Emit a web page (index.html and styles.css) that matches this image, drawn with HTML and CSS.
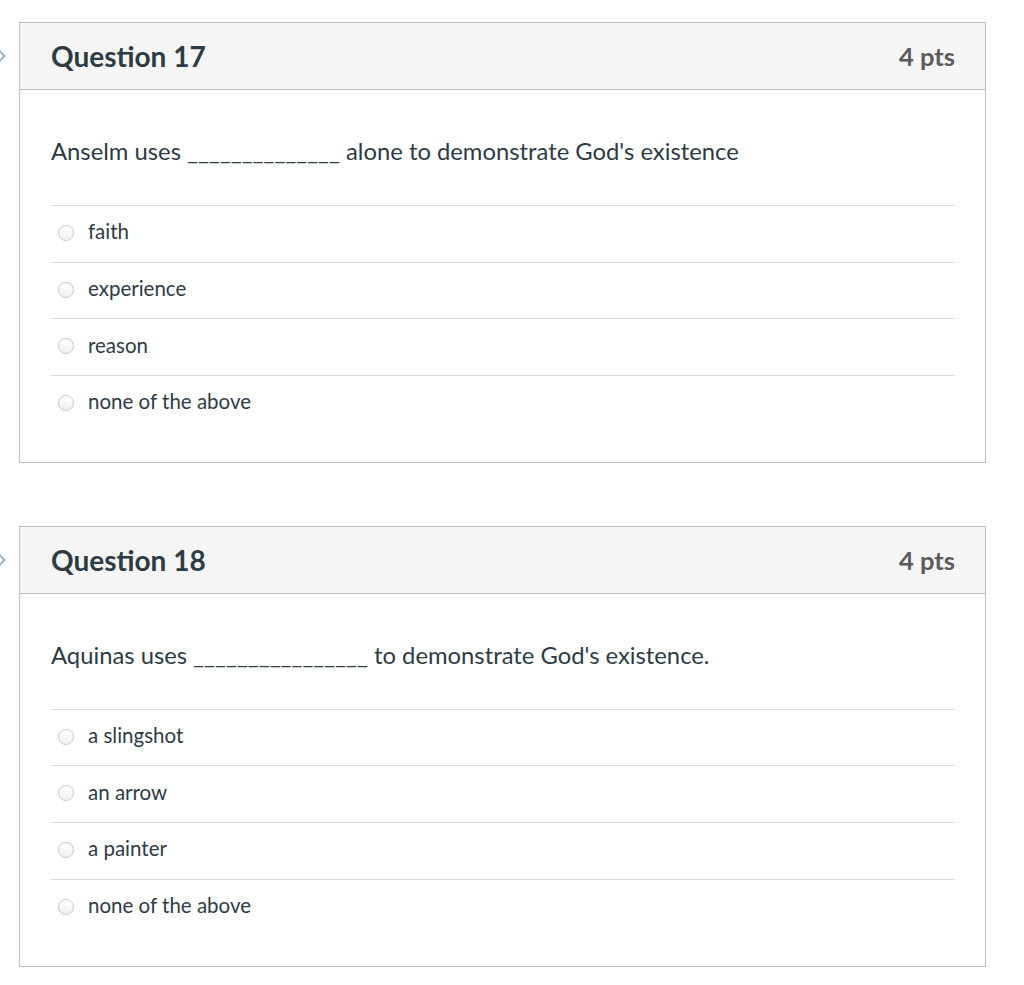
FILE: index.html
```html
<!DOCTYPE html>
<html>
<head>
<meta charset="utf-8">
<link rel="stylesheet" href="styles.css">
</head>
<body>
<div class="quiz">
  <div class="question-row">
    <div class="gutter">
      <svg class="chev" width="8" height="14" viewBox="0 0 8 14"><polyline points="0,1.5 5.5,7 0,12.5" fill="none" stroke="#9db6ca" stroke-width="2.2"/></svg>
    </div>
    <div class="card">
      <div class="card-header">
        <h2 class="title">Question 17</h2>
        <span class="pts">4 pts</span>
      </div>
      <div class="card-body">
        <p class="qtext">Anselm uses ______________ alone to demonstrate God's existence</p>
        <div class="answers">
          <label class="answer"><span class="radio"></span><span class="atext">faith</span></label>
          <label class="answer"><span class="radio"></span><span class="atext">experience</span></label>
          <label class="answer"><span class="radio"></span><span class="atext">reason</span></label>
          <label class="answer"><span class="radio"></span><span class="atext">none of the above</span></label>
        </div>
      </div>
    </div>
  </div>
  <div class="question-row">
    <div class="gutter">
      <svg class="chev" width="8" height="14" viewBox="0 0 8 14"><polyline points="0,1.5 5.5,7 0,12.5" fill="none" stroke="#9db6ca" stroke-width="2.2"/></svg>
    </div>
    <div class="card">
      <div class="card-header">
        <h2 class="title">Question 18</h2>
        <span class="pts">4 pts</span>
      </div>
      <div class="card-body">
        <p class="qtext">Aquinas uses ________________ to demonstrate God's existence.</p>
        <div class="answers">
          <label class="answer"><span class="radio"></span><span class="atext">a slingshot</span></label>
          <label class="answer"><span class="radio"></span><span class="atext">an arrow</span></label>
          <label class="answer"><span class="radio"></span><span class="atext">a painter</span></label>
          <label class="answer"><span class="radio"></span><span class="atext">none of the above</span></label>
        </div>
      </div>
    </div>
  </div>
</div>
</body>
</html>
```

FILE: styles.css
```css
html, body {
  margin: 0;
  padding: 0;
  background: #ffffff;
}
body {
  font-family: Lato, "Open Sans", sans-serif;
  color: #2d3b45;
}
.quiz {
  padding-top: 22px;
  display: flex;
  flex-direction: column;
  gap: 63px;
}
.question-row {
  display: flex;
}
.gutter {
  width: 19px;
  flex: none;
  padding-top: 27px;
  box-sizing: border-box;
}
.chev {
  display: block;
  margin-left: -1px;
}
.card {
  width: 967px;
  box-sizing: border-box;
  border: 1px solid #bdbdbd;
  flex: none;
}
.card-header {
  height: 66px;
  background: #f5f5f5;
  border-bottom: 1px solid #bdbdbd;
  display: flex;
  align-items: center;
  justify-content: space-between;
  padding: 0 30px 0 31px;
}
.title {
  margin: 0;
  font-size: 28px;
  font-weight: 700;
  color: #2d3b45;
}
.pts {
  font-size: 25.5px;
  font-weight: 700;
  color: #5b5b5b;
}
.card-body {
  padding: 46px 30px 30px 31px;
}
.qtext {
  margin: 0;
  font-size: 23.8px;
  line-height: 30px;
  height: 69px;
}
.answer {
  display: flex;
  align-items: center;
  height: 55.7px;
  border-top: 1px solid #dcdcdc;
  padding-left: 7px;
}
.radio {
  width: 16px;
  height: 16px;
  border: 1px solid #c8c8c8;
  border-radius: 50%;
  background: linear-gradient(#ffffff, #f0f0f0);
  box-sizing: border-box;
  flex: none;
  margin-right: 14px;
  margin-top: -2px;
}
.atext {
  font-size: 20.5px;
  line-height: 24px;
  margin-top: -5px;
}
```
